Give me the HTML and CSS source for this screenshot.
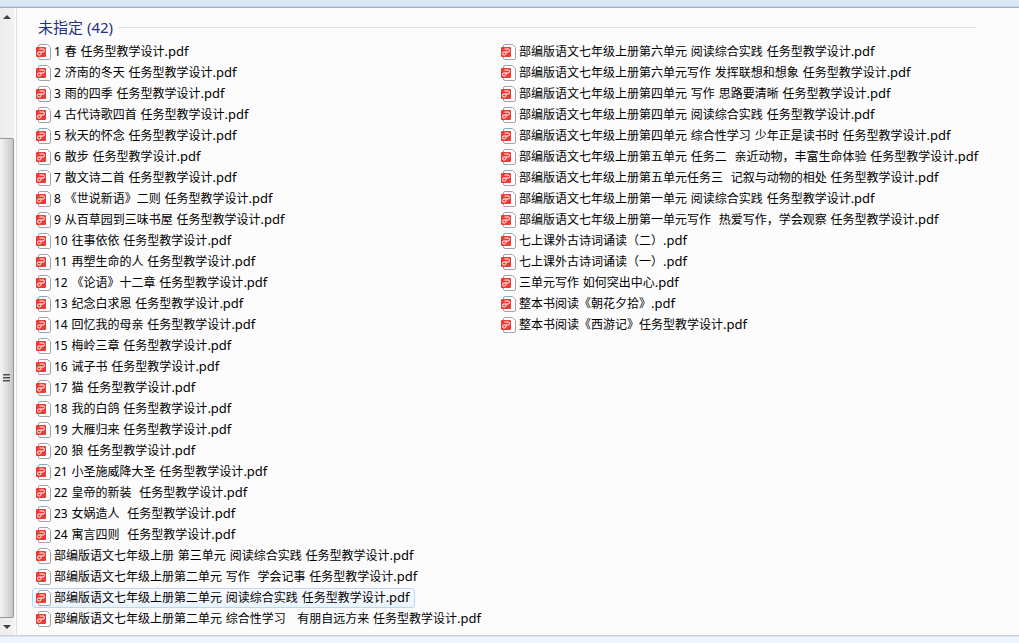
FILE: index.html
```html
<!DOCTYPE html>
<html lang="zh-CN">
<head>
<meta charset="utf-8">
<title>未指定 (42)</title>
<link rel="stylesheet" href="styles.css">
</head>
<body>
<div class="topbar"></div>
<main class="window">
  <div class="scrollbar">
    <button class="arrow" aria-label="向上滚动"><svg width="8" height="4" viewBox="0 0 8 4"><path d="M0 4 4 0l4 4z" fill="#404040"/></svg></button>
    <div class="track"><div class="thumb"><i></i><i></i><i></i></div></div>
    <button class="arrow" aria-label="向下滚动"><svg width="8" height="4" viewBox="0 0 8 4"><path d="M0 0h8L4 4z" fill="#404040"/></svg></button>
  </div>
  <section class="content">
    <h1 class="group">未指定 (42)</h1>
    <ul class="files" id="files"></ul>
  </section>
</main>
<footer class="bottombar"></footer>
<template id="pdf-icon">
  <svg class="icon" width="16" height="16" viewBox="0 0 16 16">
    <path d="M2.500 2A1.500 1.500 0 0 1 4 .5h7.500l3 3V14a1.500 1.500 0 0 1-1.500 1.500H4A1.500 1.500 0 0 1 2.500 14z" fill="#fff" stroke="#9da3b0"/>
    <rect x="0" y="3" width="10" height="10" rx="1" fill="#ec3b32"/>
    <path d="M3.500 5h3.500q1.500 0 1.500 1.500T7 8H3Q1.500 8 1.500 9.500T3 11h.5q1.500 0 1.500-1.500V8" fill="none" stroke="#fff"/>
  </svg>
</template>
<script src="files.js"></script>
</body>
</html>
```
FILE: styles.css
```css
* { box-sizing: border-box; }

body {
  margin: 0;
  min-height: 100vh;
  display: flex;
  flex-direction: column;
  background: #fcfcfc;
  color: #000;
  font: 12px/21px "DejaVu Sans", "Noto Sans CJK SC", sans-serif;
}

.topbar {
  height: 8px;
  background: #dce7f5;
  border-bottom: 1px solid #a0afc3;
  box-shadow: inset 0 -1px #c8d7eb;
}

.window {
  flex: 1;
  display: flex;
}

.scrollbar {
  width: 17px;
  display: flex;
  flex-direction: column;
  background: linear-gradient(90deg, #ececec, #f2f2f2 14px, #fcfcfc 15px);
  border-right: 1px solid #d5e4f5;
}

.arrow {
  width: 14px;
  height: 17px;
  padding: 0;
  border: 0;
  background: none;
  display: flex;
  align-items: center;
  justify-content: center;
}

.track {
  flex: 1;
  display: flex;
  align-items: flex-end;
}

.thumb {
  width: 14px;
  height: 81%;
  border: 1px solid #979797;
  border-left: 0;
  border-radius: 0 2px 2px 0;
  background: linear-gradient(90deg, #f4f4f4, #e3e3e3 40%, #c6c6c8);
  display: flex;
  flex-direction: column;
  justify-content: center;
  gap: 1px;
  padding-left: 3px;
}

.thumb i {
  width: 7px;
  height: 2px;
  background: #4c4c4c;
  border-bottom: 1px solid #a0a0a0;
}

.content {
  flex: 1;
  min-width: 0;
  padding: 8px 43px 5px 15px;
}

.group {
  margin: 0;
  padding-left: 6px;
  display: flex;
  align-items: center;
  gap: 5px;
  color: #1e3287;
  font: 15px/22px "Noto Sans", "Noto Sans CJK SC", sans-serif;
}

.group::after {
  content: "";
  flex: 1;
  height: 1px;
  background: #e0e0e0;
}

.files {
  margin: 4px 0 0;
  padding: 0;
  list-style: none;
  display: grid;
  grid-template-columns: 465px 1fr;
  grid-template-rows: repeat(28, 21px);
  grid-auto-flow: column;
}

.file {
  justify-self: start;
  height: 20px;
  display: flex;
  align-items: center;
  gap: 2px;
  padding: 0 4px 0 3px;
  border: 1px solid transparent;
  border-radius: 3px;
  white-space: pre;
}

.file.hover {
  border-color: #b8d6fb;
  background: linear-gradient(#fafbfd, #ebf3fd);
}

.icon { flex: none; }

.num { font-family: "Noto Sans", sans-serif; }

.ext {
  font-family: "Noto Sans", sans-serif;
  font-size: 13px;
}

.bottombar {
  height: 8px;
  background: #f0f4fc;
  border-top: 1px solid #c8d0dc;
  box-shadow: inset 0 1px #dbe6f3;
}
```
FILE: files.js
```js
const names = [
  "1 春 任务型教学设计",
  "2 济南的冬天 任务型教学设计",
  "3 雨的四季 任务型教学设计",
  "4 古代诗歌四首 任务型教学设计",
  "5 秋天的怀念 任务型教学设计",
  "6 散步 任务型教学设计",
  "7 散文诗二首 任务型教学设计",
  "8 《世说新语》二则 任务型教学设计",
  "9 从百草园到三味书屋 任务型教学设计",
  "10 往事依依 任务型教学设计",
  "11 再塑生命的人 任务型教学设计",
  "12 《论语》十二章 任务型教学设计",
  "13 纪念白求恩 任务型教学设计",
  "14 回忆我的母亲 任务型教学设计",
  "15 梅岭三章 任务型教学设计",
  "16 诫子书 任务型教学设计",
  "17 猫 任务型教学设计",
  "18 我的白鸽 任务型教学设计",
  "19 大雁归来 任务型教学设计",
  "20 狼 任务型教学设计",
  "21 小圣施威降大圣 任务型教学设计",
  "22 皇帝的新装  任务型教学设计",
  "23 女娲造人  任务型教学设计",
  "24 寓言四则  任务型教学设计",
  "部编版语文七年级上册 第三单元 阅读综合实践 任务型教学设计",
  "部编版语文七年级上册第二单元 写作  学会记事 任务型教学设计",
  "部编版语文七年级上册第二单元 阅读综合实践 任务型教学设计",
  "部编版语文七年级上册第二单元 综合性学习   有朋自远方来 任务型教学设计",
  "部编版语文七年级上册第六单元 阅读综合实践 任务型教学设计",
  "部编版语文七年级上册第六单元写作 发挥联想和想象 任务型教学设计",
  "部编版语文七年级上册第四单元 写作 思路要清晰 任务型教学设计",
  "部编版语文七年级上册第四单元 阅读综合实践 任务型教学设计",
  "部编版语文七年级上册第四单元 综合性学习 少年正是读书时 任务型教学设计",
  "部编版语文七年级上册第五单元 任务二  亲近动物，丰富生命体验 任务型教学设计",
  "部编版语文七年级上册第五单元任务三  记叙与动物的相处 任务型教学设计",
  "部编版语文七年级上册第一单元 阅读综合实践 任务型教学设计",
  "部编版语文七年级上册第一单元写作  热爱写作，学会观察 任务型教学设计",
  "七上课外古诗词诵读（二）",
  "七上课外古诗词诵读（一）",
  "三单元写作 如何突出中心",
  "整本书阅读《朝花夕拾》",
  "整本书阅读《西游记》任务型教学设计"
];
const hovered = 26;

const list = document.getElementById("files");
const icon = document.getElementById("pdf-icon");

names.forEach((name, i) => {
  const [, num, title] = name.match(/^(\d*)(.*)$/);
  const li = document.createElement("li");
  li.className = i === hovered ? "file hover" : "file";
  li.append(icon.content.cloneNode(true));
  const label = document.createElement("span");
  label.innerHTML = `<span class="num">${num}</span>${title}<span class="ext">.pdf</span>`;
  li.append(label);
  list.append(li);
});
```
